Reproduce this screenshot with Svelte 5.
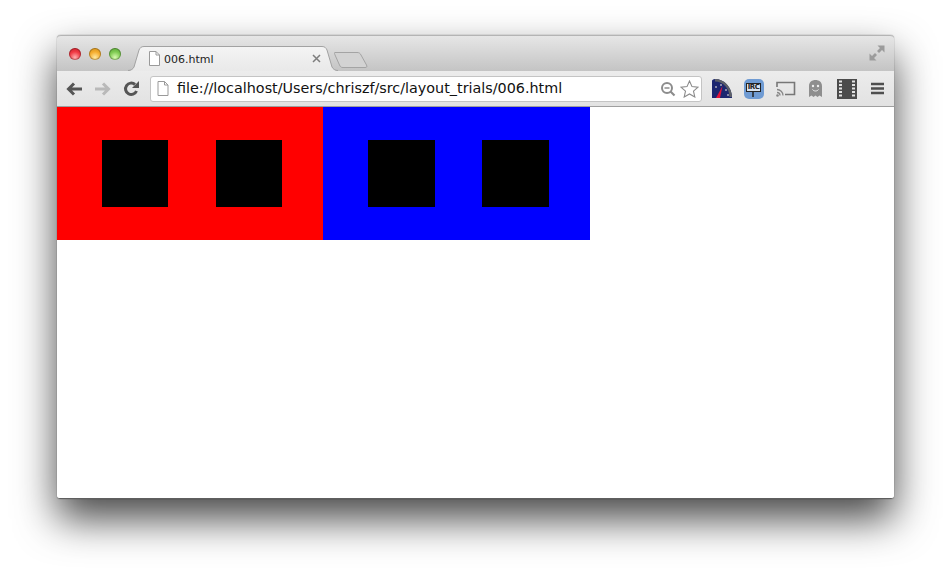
<script>
  const squares = [0, 1];
  const panels = ['red', 'blue'];
</script>

<div class="stage">
  <div class="window">
    <header class="titlebar">
      <div class="lights">
        <span class="light l-red"></span>
        <span class="light l-amber"></span>
        <span class="light l-green"></span>
      </div>
      <div class="tab">
        <svg class="tabshape" width="210" height="25" viewBox="0 0 210 25">
          <defs>
            <linearGradient id="tabg" x1="0" y1="0" x2="0" y2="1">
              <stop offset="0" stop-color="#f4f4f4" />
              <stop offset="1" stop-color="#e9e9e9" />
            </linearGradient>
          </defs>
          <path d="M0 25C3 25 5 23 6 21L11 4C12 2 13 .5 16 .5L194 .5C197 .5 198 2 199 4L204 21C205 23 207 25 210 25Z" fill="url(#tabg)" />
          <path d="M0 24.500C3 24.500 5 23 6 21L11 4C12 2 13 .5 16 .5L194 .5C197 .5 198 2 199 4L204 21C205 23 207 24.500 210 24.500" fill="none" stroke="#a2a2a2" />
        </svg>
        <svg class="file" width="13" height="15" viewBox="0 0 13 15">
          <path d="M1.500 .5H8L11.500 4V14.500H1.500Z" fill="#fff" stroke="#9a9a9a" />
          <path d="M8 .5V4H11.500" fill="none" stroke="#9a9a9a" />
        </svg>
        <span class="tabtitle">006.html</span>
        <svg class="close" width="9" height="9" viewBox="0 0 9 9">
          <path d="M1 1L8 8M8 1L1 8" stroke="#7d7d7d" stroke-width="1.500" />
        </svg>
      </div>
      <svg class="newtab" width="34" height="18" viewBox="0 0 34 18">
        <path d="M1 1.500H23C25 1.500 26 2 27 4L32.500 14C33.500 16 32.500 16.500 31 16.500H9C7 16.500 6.500 16 5.500 14L.8 3.500C.3 2 .3 1.500 1 1.500Z" fill="#d3d3d3" stroke="#a4a4a4" />
      </svg>
      <svg class="fullscreen" width="16" height="16" viewBox="0 0 16 16">
        <path d="M8.500 .5H15.500V7.500L13 5L10 8L8 6L11 3Z" fill="#9b9b9b" />
        <path d="M.5 15.500V8.500L3 11L6 8L8 10L5 13L7.500 15.500Z" fill="#9b9b9b" />
      </svg>
    </header>

    <nav class="toolbar">
      <svg class="nav" width="18" height="16" viewBox="0 0 18 16">
        <path d="M17 8H4M9 2.500L3.500 8L9 13.500" fill="none" stroke="#555" stroke-width="3" />
      </svg>
      <svg class="nav" width="18" height="16" viewBox="0 0 18 16">
        <path d="M1 8H14M9 2.500L14.500 8L9 13.500" fill="none" stroke="#b9b9b9" stroke-width="3" />
      </svg>
      <svg class="nav" width="17" height="17" viewBox="0 0 17 17">
        <path d="M13.500 11A5.700 5.700 0 1 1 12 4.500" fill="none" stroke="#555" stroke-width="3" />
        <path d="M9 8H16V1Z" fill="#555" />
      </svg>

      <div class="omnibox">
        <svg class="file small" width="12" height="15" viewBox="0 0 12 15">
          <path d="M1 .5H7.500L11 4V14.500H1Z" fill="#fff" stroke="#9a9a9a" />
          <path d="M7.500 .5V4H11" fill="none" stroke="#9a9a9a" />
        </svg>
        <span class="url">file://localhost/Users/chriszf/src/layout_trials/006.html</span>
        <svg class="zoomglass" width="16" height="16" viewBox="0 0 16 16">
          <circle cx="7" cy="7" r="5" fill="none" stroke="#8c8c8c" stroke-width="2" />
          <path d="M4.500 7H9.500" stroke="#8c8c8c" stroke-width="1.500" />
          <path d="M10.500 10.500L14.500 14.500" stroke="#8c8c8c" stroke-width="2.200" />
        </svg>
        <svg class="star" width="19" height="18" viewBox="0 0 19 18">
          <path d="M9.500 1L12 6.600L18 7.200L13.500 11.200L14.800 17L9.500 14L4.200 17L5.500 11.200L1 7.200L7 6.600Z" fill="#fff" stroke="#8b8b8b" stroke-width="1.100" />
        </svg>
      </div>

      <div class="extensions">
        <svg width="20" height="20" viewBox="0 0 20 20">
          <path d="M0 19V2C0 1 1 0 3 0C12 0 20 8 20 19Z" fill="#1c2670" />
          <path d="M3 0C12 0 20 8 20 18H17.500C17.500 9 11 2.500 3 2.500Z" fill="#5d6068" />
          <path d="M4 19L10.500 7L8 19Z" fill="#e2123a" />
          <circle cx="4" cy="8" r="1" fill="#aab" />
          <circle cx="9" cy="6" r="1" fill="#aab" />
          <circle cx="14" cy="11" r="1" fill="#aab" />
          <circle cx="16" cy="16" r="1" fill="#aab" />
        </svg>
        <div class="irc">
          <span class="irc-label">IRC</span>
          <svg class="irc-tail" width="8" height="7" viewBox="0 0 8 7">
            <path d="M7 0V6" stroke="#222" stroke-width="1.500" />
          </svg>
        </div>
        <svg width="20" height="16" viewBox="0 0 20 16">
          <path d="M1 6V1.500H18.500V13.500H9" fill="none" stroke="#777" stroke-width="1.600" />
          <path d="M1 8.500A6 6 0 0 1 7 14.500M1 11.500A3 3 0 0 1 4 14.500" fill="none" stroke="#888" stroke-width="1.300" />
          <circle cx="1.500" cy="14.500" r="1.300" fill="#888" />
        </svg>
        <svg width="15" height="19" viewBox="0 0 15 19">
          <path d="M1 18V7C1 3 4 1 7.500 1C11 1 14 3 14 7V18L11.500 16.500L9.500 18L7.500 16.500L5.500 18L3.500 16.500Z" fill="#8e8e8e" />
          <circle cx="5" cy="7" r="1.200" fill="#eee" />
          <circle cx="10" cy="7" r="1.200" fill="#eee" />
          <path d="M4.500 10.500C6 12.500 9 12.500 10.500 10.500" fill="none" stroke="#eee" />
        </svg>
        <svg class="spaced" width="20" height="20" viewBox="0 0 20 20">
          <rect width="20" height="20" fill="#4b4b4b" />
          <path d="M2 2.500H5M2 6H5M2 9.500H5M2 13H5M2 16.500H5M15 2.500H18M15 6H18M15 9.500H18M15 13H18M15 16.500H18" stroke="#e2e2e2" stroke-width="2" />
        </svg>
        <svg class="spaced" width="13" height="13" viewBox="0 0 13 13">
          <path d="M0 2H13M0 6.500H13M0 11H13" stroke="#4f4f4f" stroke-width="2.600" />
        </svg>
      </div>
    </nav>

    <main class="page">
      <div class="panels">
        {#each panels as color}
          <section class="panel {color}">
            {#each squares as s (s)}
              <div class="square"></div>
            {/each}
          </section>
        {/each}
      </div>
    </main>
  </div>
</div>

<style>
  :global(body) {
    margin: 0;
    background: #fff;
  }
  .stage {
    width: 951px;
    height: 577px;
    padding: 35px 57px 0;
    box-sizing: border-box;
    overflow: hidden;
  }
  .window {
    width: 837px;
    height: 464px;
    display: flex;
    flex-direction: column;
    border-radius: 4px 4px 3px 3px;
    box-shadow:
      0 0 1px rgba(0, 0, 0, 0.7),
      0 20px 40px rgba(0, 0, 0, 0.72);
    background: #fff;
  }
  .titlebar {
    height: 36px;
    flex: none;
    box-sizing: border-box;
    display: flex;
    align-items: flex-end;
    position: relative;
    border-radius: 4px 4px 0 0;
    background: linear-gradient(#e6e6e6, #c4c4c4);
    border-top: 1px solid #b4b4b4;
  }
  .lights {
    display: flex;
    gap: 8px;
    align-self: flex-start;
    margin: 12px 0 0 12px;
    width: 52px;
    flex: none;
  }
  .light {
    width: 12px;
    height: 12px;
    border-radius: 50%;
    box-shadow: inset 0 0 0 1px rgba(0, 0, 0, 0.25);
  }
  .l-red {
    background: radial-gradient(circle at 50% 78%, #ffb0b0, #f03a44 50%, #c01824);
  }
  .l-amber {
    background: radial-gradient(circle at 50% 78%, #ffe9a0, #f5ad2e 50%, #c98a14);
  }
  .l-green {
    background: radial-gradient(circle at 50% 78%, #d8fbb0, #7fcb52 50%, #4f9a30);
  }
  .tab {
    position: relative;
    width: 198px;
    height: 25px;
    margin-left: 12px;
    display: flex;
    align-items: center;
    flex: none;
    z-index: 1;
  }
  .tabshape {
    position: absolute;
    left: -5px;
    bottom: 0;
  }
  .tab .file {
    position: relative;
    margin-left: 15px;
  }
  .tabtitle {
    position: relative;
    margin: 2px 0 0 3px;
    font: 11px/1 "DejaVu Sans", Verdana, sans-serif;
    color: #222;
  }
  .close {
    position: absolute;
    left: 179px;
    top: 8px;
  }
  .newtab {
    margin: 0 0 2px 3px;
    flex: none;
  }
  .fullscreen {
    position: absolute;
    right: 9px;
    top: 9px;
  }
  .toolbar {
    height: 36px;
    flex: none;
    box-sizing: border-box;
    display: flex;
    align-items: center;
    padding-left: 8px;
    gap: 11px;
    background: linear-gradient(#ececec, #e2e2e2);
    border-bottom: 1px solid #9f9f9f;
  }
  .nav {
    flex: none;
  }
  .omnibox {
    width: 552px;
    height: 26px;
    margin-left: -1px;
    box-sizing: border-box;
    display: flex;
    align-items: center;
    background: #fff;
    border: 1px solid #c4c4c4;
    border-radius: 3px;
    flex: none;
    padding: 0 2px 0 6px;
  }
  .url {
    margin-left: 8px;
    font: 14.350px/1 "DejaVu Sans", Verdana, sans-serif;
    color: #111;
    white-space: nowrap;
    flex: 1;
  }
  .zoomglass {
    margin-right: 4px;
    flex: none;
  }
  .star {
    flex: none;
  }
  .extensions {
    display: flex;
    align-items: center;
    gap: 12px;
    margin-left: -1px;
    flex: none;
  }
  .spaced {
    margin-left: 2px;
  }
  .irc {
    width: 20px;
    height: 20px;
    box-sizing: border-box;
    border-radius: 5px;
    background: #6f9bd3;
    position: relative;
    flex: none;
  }
  .irc-label {
    position: absolute;
    left: 2px;
    top: 4px;
    width: 15px;
    height: 9px;
    box-sizing: border-box;
    border: 1px solid #222;
    background: #d9e3ee;
    font: bold 7px/7px "DejaVu Sans", sans-serif;
    color: #222;
    text-align: center;
    letter-spacing: -0.5px;
  }
  .irc-tail {
    position: absolute;
    left: 2px;
    top: 12px;
  }
  .page {
    flex: 1;
    background: #fff;
    border-radius: 0 0 3px 3px;
    border-bottom: 1px solid #5f5f5f;
  }
  .panels {
    display: flex;
  }
  .panel {
    width: 266.400px;
    height: 133px;
    padding: 33px 0 0 44.800px;
    box-sizing: border-box;
    display: flex;
    gap: 47.600px;
    flex: none;
  }
  .red {
    background: #f00;
  }
  .blue {
    background: #00f;
  }
  .square {
    width: 66.400px;
    height: 67px;
    background: #000;
    flex: none;
  }
</style>
